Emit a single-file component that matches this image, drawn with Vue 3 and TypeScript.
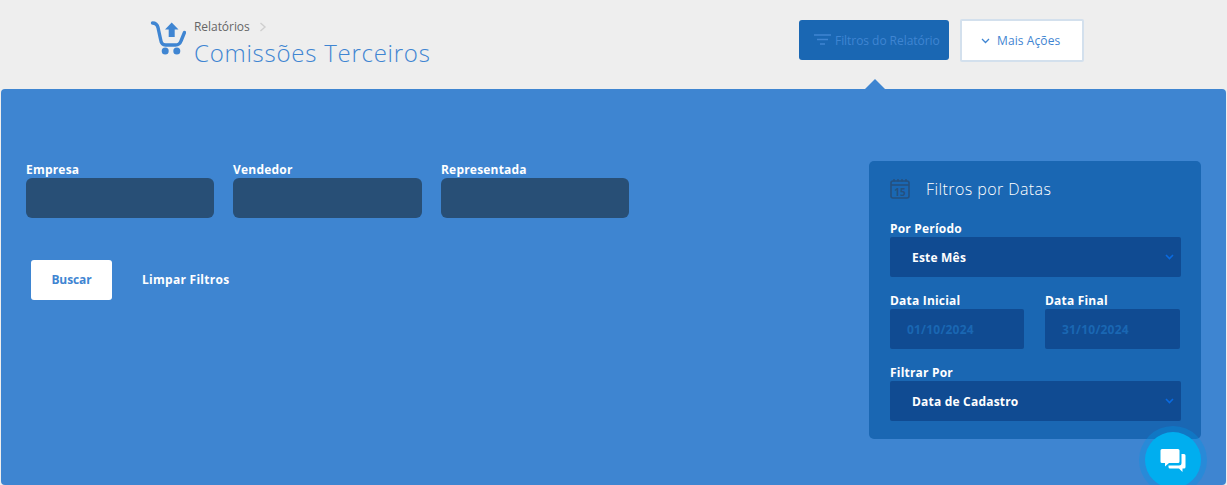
<script setup lang="ts">
const fields: string[] = ['Empresa', 'Vendedor', 'Representada']
</script>

<template>
  <div class="page">
    <header class="top">
      <div class="brand">
        <svg class="cart" width="36" height="36" viewBox="0 0 36 36" fill="none">
          <path d="M2.5 3 C6 3 7.2 4.5 8 7.5 L10.5 19 C11.2 23.5 12.5 25 15.5 25 H25.5 C28.5 25 30 23.8 31 21 L34.5 12.5" stroke="#3f85d2" stroke-width="3.4" stroke-linecap="round" stroke-linejoin="round"/>
          <path d="M21.7 2.5 L28.5 9.5 H24.7 V17 H18.7 V9.5 H15 Z" fill="#3f85d2"/>
          <circle cx="15.2" cy="31" r="3.5" fill="#3f85d2"/>
          <circle cx="26.8" cy="31" r="3.5" fill="#3f85d2"/>
        </svg>
        <div class="titles">
          <div class="crumb">
            <span>Relatórios</span>
            <svg width="8" height="10" viewBox="0 0 8 10" fill="none"><path d="M1.5 1 L6 5 L1.5 9" stroke="#cfcfcf" stroke-width="1.4"/></svg>
          </div>
          <h1>Comissões Terceiros</h1>
        </div>
      </div>
      <div class="actions">
        <button class="btn-filter">
          <svg width="17" height="12" viewBox="0 0 17 12" fill="none">
            <path d="M0 1 H17 M3 5.5 H14 M6 10 H11" stroke="#3f85d2" stroke-width="1.6"/>
          </svg>
          Filtros do Relatório
        </button>
        <button class="btn-more">
          <svg width="9" height="6" viewBox="0 0 9 6" fill="none"><path d="M1 1 L4.5 4.5 L8 1" stroke="#3f85d2" stroke-width="1.3"/></svg>
          Mais Ações
        </button>
      </div>
    </header>

    <main class="panel">
      <span class="notch"></span>
      <section class="left">
        <div class="fields">
          <div v-for="f in fields" :key="f" class="field">
            <label>{{ f }}</label>
            <div class="input"></div>
          </div>
        </div>
        <div class="buttons">
          <button class="search">Buscar</button>
          <button class="clear">Limpar Filtros</button>
        </div>
      </section>

      <aside class="dates">
        <div class="dates-head">
          <svg width="20" height="20" viewBox="0 0 20 20" fill="none">
            <rect x="1" y="2" width="18" height="17" rx="2" stroke="#25507f" stroke-width="1.6"/>
            <path d="M1 6 H19" stroke="#25507f" stroke-width="1.6"/>
            <path d="M4 0 V2.5 M8 0 V2.5 M12 0 V2.5 M16 0 V2.5" stroke="#25507f" stroke-width="1.4"/>
            <text x="10" y="16.5" text-anchor="middle" class="cal-num">15</text>
          </svg>
          <h2>Filtros por Datas</h2>
        </div>
        <div class="dfield first">
          <label>Por Período</label>
          <div class="select">
            <span>Este Mês</span>
            <svg width="9" height="6" viewBox="0 0 9 6" fill="none"><path d="M1 1 L4.5 4.5 L8 1" stroke="#0a6ae0" stroke-width="1.6"/></svg>
          </div>
        </div>
        <div class="date-row">
          <div class="dcol">
            <label>Data Inicial</label>
            <div class="date-input">01/10/2024</div>
          </div>
          <div class="dcol second">
            <label>Data Final</label>
            <div class="date-input">31/10/2024</div>
          </div>
        </div>
        <div class="dfield">
          <label>Filtrar Por</label>
          <div class="select">
            <span>Data de Cadastro</span>
            <svg width="9" height="6" viewBox="0 0 9 6" fill="none"><path d="M1 1 L4.5 4.5 L8 1" stroke="#0a6ae0" stroke-width="1.6"/></svg>
          </div>
        </div>
      </aside>
    </main>

    <div class="chat">
      <svg width="26" height="25" viewBox="0 0 26 25" fill="#fff">
        <path d="M2 1 H18 Q19.5 1 19.5 2.5 V13.5 Q19.5 15 18 15 H9 L5 18.5 V15 H2 Q0.5 15 0.5 13.5 V2.5 Q0.5 1 2 1 Z"/>
        <path d="M21.5 6 H24 Q25.5 6 25.5 7.5 V19 Q25.5 20.5 24 20.5 H22.5 V24 L19 20.5 H10 Q8.5 20.5 8.5 19 V17.5 H19 Q21.5 17.5 21.5 15 Z"/>
      </svg>
    </div>
  </div>
</template>

<style>
html, body { margin: 0; padding: 0; background: #eeeeee; overflow: hidden; }
</style>

<style scoped>
.page {
  position: relative;
  width: 1227px;
  height: 485px;
  overflow: hidden;
  background: #eeeeee;
  font-family: "Open Sans", "Noto Sans", sans-serif;
  display: flex;
  flex-direction: column;
}
.top {
  height: 89px;
  flex: none;
  box-sizing: border-box;
  display: flex;
  justify-content: space-between;
  padding: 0 143px 0 150px;
}
.brand { display: flex; align-items: flex-start; padding-top: 19px; gap: 8px; }
.cart { margin-top: 1px; }
.titles { display: flex; flex-direction: column; }
.crumb {
  display: flex;
  align-items: center;
  gap: 9px;
  font-size: 12px;
  line-height: 16px;
  color: #666;
  letter-spacing: -0.05px;
}
h1 {
  margin: 1px 0 0;
  font-size: 24px;
  line-height: 33px;
  font-weight: 300;
  color: #3f85d2;
  letter-spacing: 0.75px;
}
.actions { display: flex; gap: 11px; padding-top: 19px; align-items: flex-start; }
button { font-family: inherit; cursor: pointer; }
.btn-filter {
  margin-top: 1px;
  width: 150px;
  height: 40px;
  border: 0;
  border-radius: 3px;
  background: #1a67b3;
  color: #3f85d2;
  font-size: 12px;
  letter-spacing: -0.05px;
  display: flex;
  align-items: center;
  gap: 4px;
  padding: 0 0 0 15px;
}
.btn-more {
  width: 124px;
  height: 43px;
  box-sizing: border-box;
  border: 2px solid #d3e0ed;
  border-radius: 2px;
  background: #fff;
  color: #3f85d2;
  font-size: 12px;
  letter-spacing: 0.1px;
  display: flex;
  align-items: center;
  justify-content: flex-start;
  gap: 7px;
  padding: 0 0 0 19px;
}
.panel {
  position: relative;
  flex: 1;
  margin: 0 1px;
  border-radius: 4px;
  background: #3e85d1;
  display: flex;
  justify-content: space-between;
  padding: 72px 25px 0;
}
.notch {
  position: absolute;
  left: 864px;
  top: -10px;
  width: 0;
  height: 0;
  border-left: 10px solid transparent;
  border-right: 10px solid transparent;
  border-bottom: 10px solid #3e85d1;
}
.fields { display: grid; grid-template-columns: 188px 189px 188px; gap: 19px; }
.field { display: flex; flex-direction: column; }
.field label, .dates label {
  color: #fff;
  font-size: 12px;
  font-weight: 700;
  line-height: 16px;
  letter-spacing: 0.2px;
}
.left label { margin-top: 1px; }
.input {
  height: 40px;
  border-radius: 6px;
  background: #284f76;
}
.buttons { display: flex; align-items: center; margin: 42px 0 0 5px; }
.search {
  width: 81px;
  height: 40px;
  border: 0;
  border-radius: 3px;
  background: #fff;
  color: #3f85d2;
  font-size: 12px;
  font-weight: 700;
  letter-spacing: -0.1px;
  padding: 0 0 2px;
}
.clear {
  margin-left: 30px;
  border: 0;
  background: none;
  color: #fff;
  font-size: 12px;
  font-weight: 700;
  letter-spacing: 0.27px;
  padding: 0 0 2px;
}
.dates {
  width: 332px;
  height: 278px;
  box-sizing: border-box;
  border-radius: 5px;
  background: #1a67b3;
  padding: 17px 20px 0 21px;
}
.dates-head { display: flex; align-items: center; gap: 16px; height: 22px; }
.cal-num { font-size: 10px; font-weight: 700; fill: #25507f; font-family: "Open Sans", sans-serif; }
h2 {
  margin: 0;
  font-size: 16px;
  font-weight: 300;
  line-height: 22px;
  color: #fff;
  letter-spacing: 0.42px;
}
.dfield { margin-top: 16px; display: flex; flex-direction: column; }
.dfield.first { margin-top: 21px; }
.select {
  height: 40px;
  border-radius: 2px;
  background: #104b92;
  display: flex;
  align-items: center;
  justify-content: space-between;
  padding: 0 7px 0 22px;
  color: #fff;
  font-size: 12px;
  font-weight: 700;
  letter-spacing: 0.2px;
}
.date-row { display: flex; margin-top: 16px; }
.dcol { width: 134px; display: flex; flex-direction: column; }
.dcol.second { width: 135px; margin-left: 21px; }
.date-input {
  height: 40px;
  border-radius: 2px;
  background: #104b92;
  color: #1a67b3;
  display: flex;
  align-items: center;
  padding-left: 17px;
  font-size: 12px;
  font-weight: 700;
  letter-spacing: 0.2px;
}
.chat {
  position: absolute;
  left: 1145px;
  top: 432px;
  width: 56px;
  height: 56px;
  border-radius: 50%;
  background: #00aeef;
  box-shadow: 0 0 0 6px rgba(0, 150, 230, 0.35);
  display: flex;
  align-items: center;
  justify-content: center;
}
</style>
